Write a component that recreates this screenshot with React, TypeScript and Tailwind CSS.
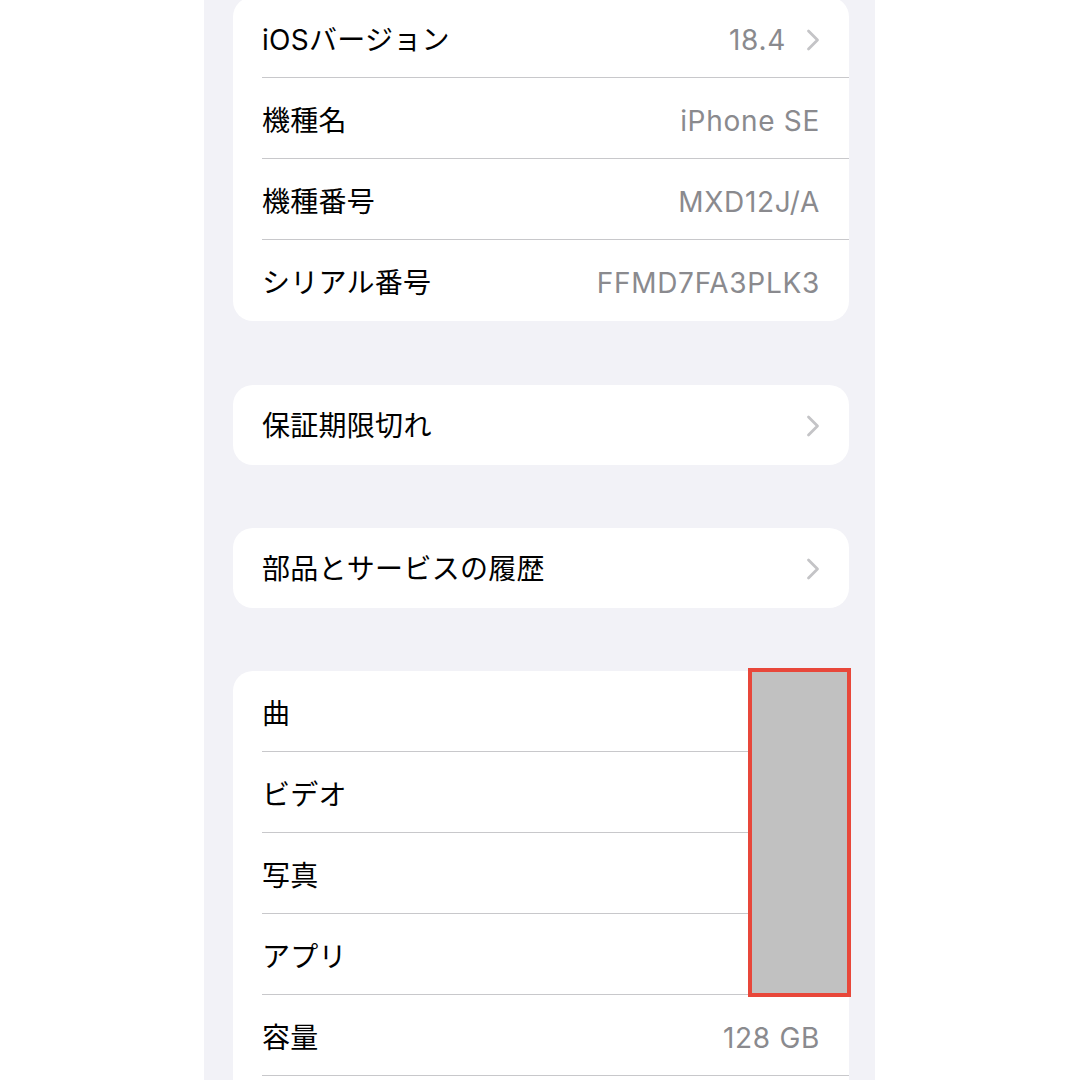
import React from 'react';

const font = { fontFamily: 'Inter, "Noto Sans CJK JP", sans-serif' };

function Chevron() {
  return (
    <svg width="14" height="22" viewBox="0 0 14 22" fill="none" className="shrink-0">
      <path d="M2.5 2 L11.5 11 L2.5 20" stroke="#c4c4c7" strokeWidth="2.8" strokeLinecap="round" strokeLinejoin="round" />
    </svg>
  );
}

function Row({
  label,
  value,
  chevron = false,
  last = false,
  single = false,
}: {
  label: string;
  value?: string;
  chevron?: boolean;
  last?: boolean;
  single?: boolean;
}) {
  return (
    <div className={`pl-[29px] ${single ? 'h-[80px]' : 'h-[81px]'}`}>
      <div
        className={`flex h-full items-center justify-between pr-[29px] ${single ? 'pt-[1px]' : 'pt-[5px]'} ${last ? '' : 'border-b border-[#c8c8cb]'}`}
      >
        <span className="text-[28px] text-black tracking-[0.01em]">{label}</span>
        <div className="flex items-center gap-[20px]">
          {value && <span className="text-[28px] text-[#8a8a8e] tracking-[0.025em]">{value}</span>}
          {chevron && <Chevron />}
        </div>
      </div>
    </div>
  );
}

export default function App() {
  return (
    <div className="w-full h-[1080px] overflow-hidden bg-white flex justify-center" style={font}>
      <div className="w-[671px] h-full bg-[#f2f2f7] pl-[29px] pr-[26px] ml-[-1px]">
        {/* About: device info */}
        <div className="mt-[-3px] rounded-[20px] bg-white overflow-hidden">
          <Row label="iOSバージョン" value="18.4" chevron />
          <Row label="機種名" value="iPhone SE" />
          <Row label="機種番号" value="MXD12J/A" />
          <Row label="シリアル番号" value="FFMD7FA3PLK3" last />
        </div>

        <div className="mt-[64px] rounded-[20px] bg-white overflow-hidden">
          <Row label="保証期限切れ" chevron last single />
        </div>

        <div className="mt-[63px] rounded-[20px] bg-white overflow-hidden">
          <Row label="部品とサービスの履歴" chevron last single />
        </div>

        {/* Media counts */}
        <div className="relative mt-[63px] rounded-t-[20px] bg-white">
          <Row label="曲" />
          <Row label="ビデオ" />
          <Row label="写真" />
          <Row label="アプリ" />
          <Row label="容量" value="128 GB" />
          <Row label="" />
          {/* redaction */}
          <div className="absolute left-[515px] top-[-3px] w-[103px] h-[329px] border-[4px] border-[#e8473a] bg-[#c1c1c1]" />
        </div>
      </div>
    </div>
  );
}
